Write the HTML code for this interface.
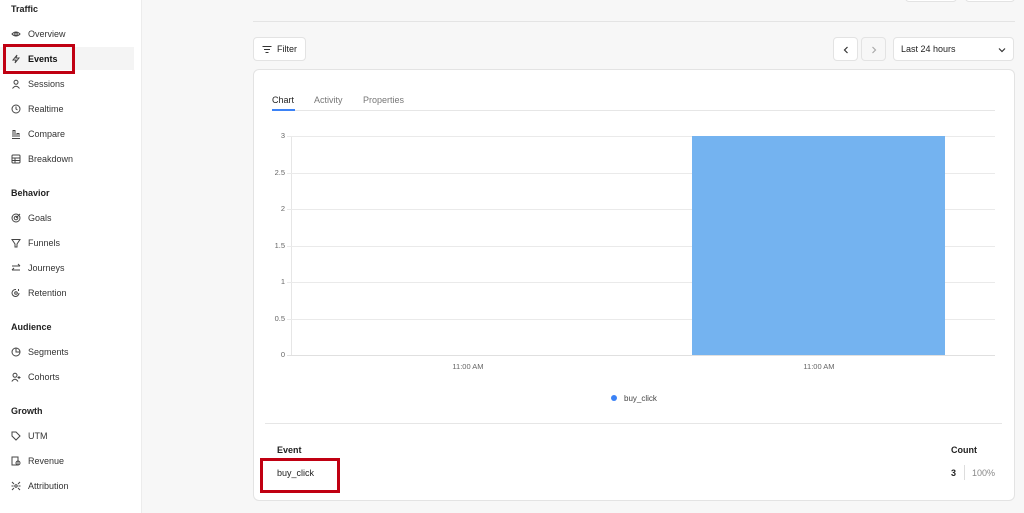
<!DOCTYPE html>
<html><head><meta charset="utf-8"><style>
*{margin:0;padding:0;box-sizing:border-box}
body{width:1024px;height:513px;overflow:hidden;background:#f7f7f7;font-family:"Liberation Sans",sans-serif;color:#222;position:relative}
.a{position:absolute}
#side{left:0;top:0;width:142px;height:513px;background:#fff;border-right:1px solid #ececec}
.h{position:absolute;left:11px;font-size:9px;font-weight:bold;color:#222}
.it{position:absolute;left:28px;font-size:9px;color:#333}
.ic{position:absolute;left:11px;width:10px;height:10px}
.ic svg{width:10px;height:10px;display:block}
.btn{position:absolute;background:#fff;border:1px solid #e3e3e3;border-radius:4px}
.t{font-size:9px;color:#555}
.y{position:absolute;left:255px;width:30px;text-align:right;font-size:7.5px;color:#666;line-height:8px}
</style></head><body>
<div class="a" id="side">
<div class="a" style="left:0;top:47px;width:134px;height:23px;background:#f4f4f4"></div>
<div class="h" style="top:4px">Traffic</div>
<div class="h" style="top:188px">Behavior</div>
<div class="h" style="top:322px">Audience</div>
<div class="h" style="top:406px">Growth</div>

<div class="ic" style="top:29px"><svg viewBox="0 0 10 10" fill="none" stroke="#444" stroke-width="1"><path d="M1 5Q5 1 9 5Q5 9 1 5Z"/><circle cx="5" cy="5" r="1.3"/></svg></div><div class="it" style="top:29px">Overview</div>
<div class="ic" style="top:54px"><svg viewBox="0 0 10 10" fill="none" stroke="#444" stroke-width="1"><path d="M6 1L2 6H5L4 9L8 4H5Z"/></svg></div><div class="it" style="top:54px;font-weight:bold;color:#111">Events</div>
<div class="ic" style="top:79px"><svg viewBox="0 0 10 10" fill="none" stroke="#444" stroke-width="1"><circle cx="5" cy="3.3" r="2"/><path d="M1.5 9.5Q5 5 8.5 9.5"/></svg></div><div class="it" style="top:79px">Sessions</div>
<div class="ic" style="top:104px"><svg viewBox="0 0 10 10" fill="none" stroke="#444" stroke-width="1"><circle cx="5" cy="5" r="4"/><path d="M5 2.5V5L6.5 6"/></svg></div><div class="it" style="top:104px">Realtime</div>
<div class="ic" style="top:129px"><svg viewBox="0 0 10 10" fill="none" stroke="#444" stroke-width="1"><path d="M1 9.5H9M2 8V1.5H4V8M6 8V4.5H8V8"/></svg></div><div class="it" style="top:129px">Compare</div>
<div class="ic" style="top:154px"><svg viewBox="0 0 10 10" fill="none" stroke="#444" stroke-width="1"><rect x="1" y="1" width="8" height="8" rx="1"/><path d="M1 4H9M1 6.5H9M4 4V9"/></svg></div><div class="it" style="top:154px">Breakdown</div>
<div class="ic" style="top:213px"><svg viewBox="0 0 10 10" fill="none" stroke="#444" stroke-width="1"><circle cx="5" cy="5" r="4"/><circle cx="5" cy="5" r="1.8"/><path d="M5 5L9 1"/></svg></div><div class="it" style="top:213px">Goals</div>
<div class="ic" style="top:238px"><svg viewBox="0 0 10 10" fill="none" stroke="#444" stroke-width="1"><path d="M1 1.5H9L6 6V9H4V6Z"/></svg></div><div class="it" style="top:238px">Funnels</div>
<div class="ic" style="top:263px"><svg viewBox="0 0 10 10" fill="none" stroke="#444" stroke-width="1"><path d="M1 3H9M7 1L9 3M9 7H1M3 5L1 7"/></svg></div><div class="it" style="top:263px">Journeys</div>
<div class="ic" style="top:288px"><svg viewBox="0 0 10 10" fill="none" stroke="#444" stroke-width="1"><path d="M8 5A3.5 3.5 0 1 1 5 1.5"/><circle cx="5" cy="5" r="1.3"/><path d="M7.5 1V3"/></svg></div><div class="it" style="top:288px">Retention</div>
<div class="ic" style="top:347px"><svg viewBox="0 0 10 10" fill="none" stroke="#444" stroke-width="1"><circle cx="5" cy="5" r="4"/><path d="M5 1V5H9"/></svg></div><div class="it" style="top:347px">Segments</div>
<div class="ic" style="top:372px"><svg viewBox="0 0 10 10" fill="none" stroke="#444" stroke-width="1"><circle cx="4" cy="3.3" r="2"/><path d="M0.8 9.5Q4 5 7 9.5M8 4V7M6.5 5.5H9.5"/></svg></div><div class="it" style="top:372px">Cohorts</div>
<div class="ic" style="top:431px"><svg viewBox="0 0 10 10" fill="none" stroke="#444" stroke-width="1"><path d="M1 1H5L9 5L5 9L1 5Z"/></svg></div><div class="it" style="top:431px">UTM</div>
<div class="ic" style="top:456px"><svg viewBox="0 0 10 10" fill="none" stroke="#444" stroke-width="1"><rect x="1" y="1" width="6" height="8"/><circle cx="7" cy="7" r="2"/></svg></div><div class="it" style="top:456px">Revenue</div>
<div class="ic" style="top:481px"><svg viewBox="0 0 10 10" fill="none" stroke="#444" stroke-width="1"><circle cx="5" cy="5" r="1.2"/><path d="M1 1L3 3M9 1L7 3M1 9L3 7M9 9L7 7M0.5 5H2.5M7.5 5H9.5"/></svg></div><div class="it" style="top:481px">Attribution</div>
</div>
<div class="a" style="left:3px;top:44px;width:72px;height:30px;border:3px solid #c00012"></div>

<div class="btn" style="left:905px;top:-10px;width:52px;height:12px"></div>
<div class="btn" style="left:965px;top:-10px;width:50px;height:12px"></div>
<div class="a" style="left:253px;top:21px;width:762px;height:1px;background:#e4e4e4"></div>

<div class="btn" style="left:253px;top:37px;width:53px;height:24px"><svg class="a" style="left:8px;top:7px" width="10" height="9" viewBox="0 0 10 9" fill="none" stroke="#333" stroke-width="1"><path d="M0.5 1.5H9.5M2 4.5H8M3.5 7.5H6.5"/></svg><span class="a" style="left:23px;top:6px;font-size:9px;color:#222">Filter</span></div>
<div class="btn" style="left:833px;top:37px;width:25px;height:24px"><svg class="a" style="left:9px;top:8px" width="6" height="8" viewBox="0 0 6 8" fill="none" stroke="#333" stroke-width="1.2"><path d="M4.5 1L1.5 4L4.5 7"/></svg></div>
<div class="btn" style="left:861px;top:37px;width:25px;height:24px;background:#f7f7f7"><svg class="a" style="left:9px;top:8px" width="6" height="8" viewBox="0 0 6 8" fill="none" stroke="#aaa" stroke-width="1.2"><path d="M1.5 1L4.5 4L1.5 7"/></svg></div>
<div class="btn" style="left:893px;top:37px;width:121px;height:24px"><span class="a" style="left:7px;top:6px;font-size:9px;color:#222">Last 24 hours</span><svg class="a" style="left:104px;top:9px" width="8" height="6" viewBox="0 0 8 6" fill="none" stroke="#333" stroke-width="1.2"><path d="M1 1.5L4 4.5L7 1.5"/></svg></div>

<div class="btn" style="left:253px;top:69px;width:762px;height:432px;border-radius:6px"></div>
<div class="a t" style="left:272px;top:95px;color:#222">Chart</div>
<div class="a t" style="left:314px;top:95px;color:#777">Activity</div>
<div class="a t" style="left:363px;top:95px;color:#777">Properties</div>
<div class="a" style="left:272px;top:110px;width:723px;height:1px;background:#e6e6e6"></div>
<div class="a" style="left:272px;top:109px;width:23px;height:2px;background:#3b82f6"></div>

<div class="a" style="left:291px;top:136px;width:1px;height:220px;background:#e6e6e6"></div>
<div class="a" style="left:287px;top:136px;width:708px;height:1px;background:#eaeaea"></div>
<div class="a" style="left:287px;top:173px;width:708px;height:1px;background:#eaeaea"></div>
<div class="a" style="left:287px;top:209px;width:708px;height:1px;background:#eaeaea"></div>
<div class="a" style="left:287px;top:246px;width:708px;height:1px;background:#eaeaea"></div>
<div class="a" style="left:287px;top:282px;width:708px;height:1px;background:#eaeaea"></div>
<div class="a" style="left:287px;top:319px;width:708px;height:1px;background:#eaeaea"></div>
<div class="a" style="left:287px;top:355px;width:708px;height:1px;background:#e0e0e0"></div>
<div class="y" style="top:132px">3</div>
<div class="y" style="top:169px">2.5</div>
<div class="y" style="top:205px">2</div>
<div class="y" style="top:242px">1.5</div>
<div class="y" style="top:278px">1</div>
<div class="y" style="top:315px">0.5</div>
<div class="y" style="top:351px">0</div>
<div class="a" style="left:692px;top:136px;width:253px;height:219px;background:#74b3f0"></div>
<div class="a" style="left:438px;top:362px;width:60px;text-align:center;font-size:7.5px;color:#666">11:00 AM</div>
<div class="a" style="left:789px;top:362px;width:60px;text-align:center;font-size:7.5px;color:#666">11:00 AM</div>
<div class="a" style="left:611px;top:395px;width:6px;height:6px;border-radius:50%;background:#3b82f6"></div>
<div class="a" style="left:624px;top:394px;font-size:8px;color:#444">buy_click</div>
<div class="a" style="left:265px;top:423px;width:737px;height:1px;background:#e6e6e6"></div>
<div class="a" style="left:277px;top:445px;font-size:9px;font-weight:bold;color:#222">Event</div>
<div class="a" style="left:951px;top:445px;font-size:9px;font-weight:bold;color:#222">Count</div>
<div class="a" style="left:277px;top:468px;font-size:9px;color:#222">buy_click</div>
<div class="a" style="left:951px;top:468px;font-size:9px;font-weight:bold;color:#222">3</div>
<div class="a" style="left:964px;top:465px;width:1px;height:15px;background:#ddd"></div>
<div class="a" style="left:972px;top:468px;font-size:9px;color:#888">100%</div>
<div class="a" style="left:260px;top:458px;width:80px;height:35px;border:3px solid #c00012"></div>
</body></html>
